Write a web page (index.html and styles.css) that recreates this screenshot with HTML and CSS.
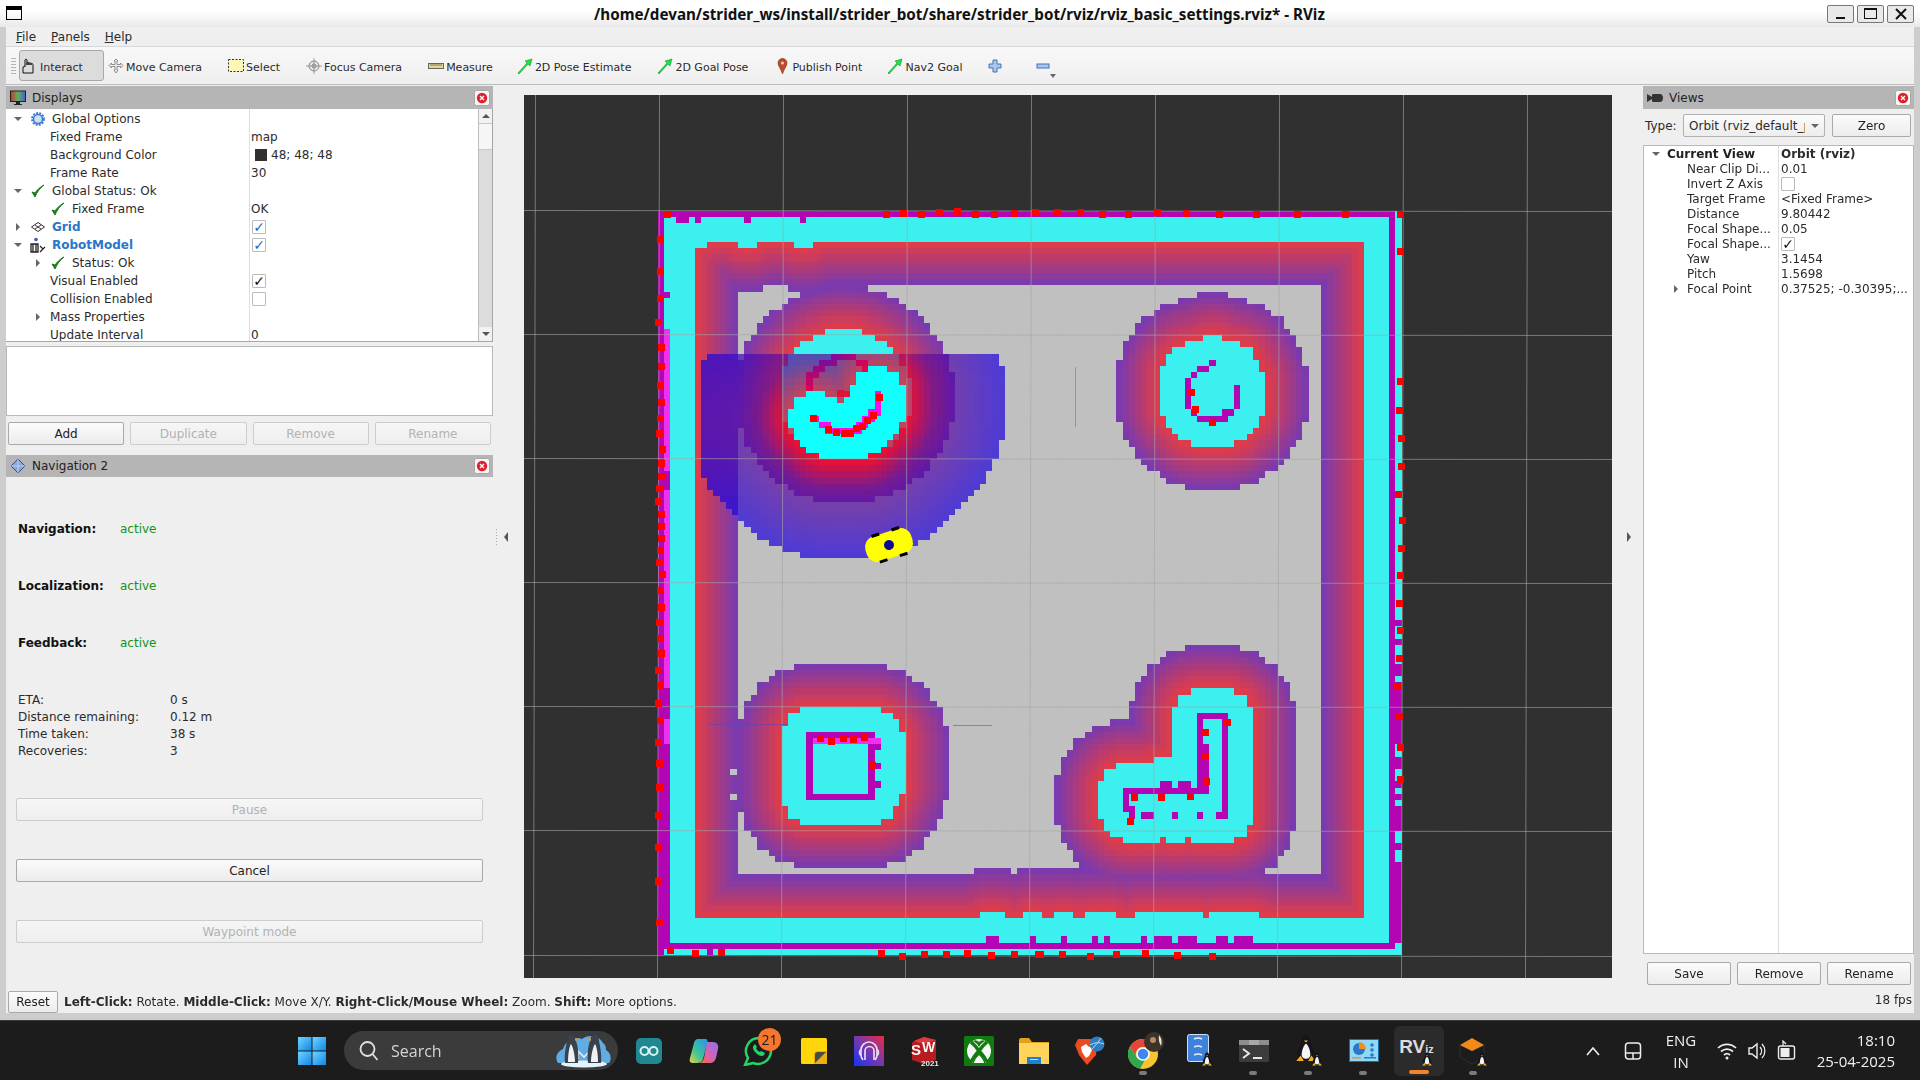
FILE: index.html
```html
<!DOCTYPE html>
<html lang="en">

<head>
    <meta charset="UTF-8">
    <title>RViz</title>
    <link rel="stylesheet" href="styles.css">
</head>

<body>
    <svg class="defs" width="0" height="0">
        <defs>
            <symbol id="check" viewBox="0 0 16 16">
                <path d="M2 9l3 5C7 9 10 5 14 2 10 4 7 7 5 10z" fill="#1e7d1e" stroke="#1e7d1e" stroke-width="1"/>
            </symbol>
            <symbol id="closeBtn" viewBox="0 0 16 16">
                <rect x=".5" y=".5" width="15" height="15" rx="2" fill="#f6f6f6" stroke="#a8a8a8"/>
                <circle cx="8" cy="8" r="5.2" fill="#e0202c"/>
                <path d="M6 6l4 4M10 6l-4 4" stroke="#fff" stroke-width="1.3"/>
            </symbol>
            <symbol id="arrowGreen" viewBox="0 0 16 16">
                <path d="M1 15L10 5 8 3l7-2-2 7-2-2L2 16z" fill="#14e83c" stroke="#0b7a22" stroke-width=".5"/>
            </symbol>
            <symbol id="tux" viewBox="0 0 20 26">
                <path d="M10 1c-3 0-4 3-4 6 0 3-4 7-4 12 0 2 1 4 3 5h10c2-1 3-3 3-5 0-5-4-9-4-12 0-3-1-6-4-6z" fill="#16161a"/>
                <path d="M10 9c-2 1-4 6-4 10 0 3 2 4 4 4s4-1 4-4c0-4-2-9-4-10z" fill="#f4f4f4"/>
                <path d="M8 6h4l-2 2z" fill="#f0b020"/>
                <path d="M1 25l4-5 3 5zM12 25l3-5 4 5z" fill="#f0b020"/>
            </symbol>
        </defs>
    </svg>

    <!-- Window title -->
    <div class="titlebar">
        <span class="win-icon"></span>
        <span class="win-title">/home/devan/strider_ws/install/strider_bot/share/strider_bot/rviz/rviz_basic_settings.rviz* - RViz</span>
        <div class="win-buttons">
            <span class="win-btn"><i class="glyph-min"></i></span>
            <span class="win-btn"><i class="glyph-max"></i></span>
            <span class="win-btn">
                <svg width="14" height="14" viewBox="0 0 14 14"><path d="M2 2l10 10M12 2L2 12" stroke="#111" stroke-width="2"/></svg>
            </span>
        </div>
    </div>

    <div class="app">
        <div class="menubar">
            <span><u>F</u>ile</span>
            <span><u>P</u>anels</span>
            <span><u>H</u>elp</span>
        </div>

        <!-- Tools -->
        <div class="toolbar">
            <span class="grip"></span>
            <div class="tool active">
                <svg class="tool-icon" viewBox="0 0 16 16"><path d="M1 15V9l2-1V9 M3 8V2c0-1 2-1 2 0v5 M5 7V5c0-1 2-1 2 0v2 M7 7V5.500c0-1 2-1 2 0V7 M9 7V6c0-1 2-.5 2 .5V15H1" fill="none" stroke="#111" stroke-width="1"/></svg>
                Interact
            </div>
            <div class="tool">
                <svg class="tool-icon" viewBox="0 0 16 16"><path d="M8 1l2 2H9v3.500h3.500V5L15 7.500 12.500 10V8.500H9V12h1l-2 3-2-3h1V8.500H3.500V10L1 7.500 3.500 5v1.500H7V3H6z" fill="#eee" stroke="#777" stroke-width=".8"/></svg>
                Move Camera
            </div>
            <div class="tool">
                <svg class="tool-icon" viewBox="0 0 16 16"><rect x=".5" y="1.500" width="15" height="12" fill="#fbf7b4" stroke="#333" stroke-width="1" stroke-dasharray="2 1.500"/></svg>
                Select
            </div>
            <div class="tool">
                <svg class="tool-icon" viewBox="0 0 16 16"><circle cx="8" cy="8" r="5" fill="#e6e6e6" stroke="#888"/><circle cx="8" cy="8" r="2" fill="none" stroke="#888"/><path d="M8 0v16M0 8h16" stroke="#888" stroke-width=".8"/></svg>
                Focus Camera
            </div>
            <div class="tool measure">
                <svg class="tool-icon" viewBox="0 0 16 16"><rect x=".5" y="5.500" width="15" height="5" fill="#e8d68c" stroke="#666"/><path d="M3 6v2M5 6v2M7 6v2M9 6v2M11 6v2M13 6v2" stroke="#777"/></svg>
                Measure
            </div>
            <div class="tool"><svg class="tool-icon"><use href="#arrowGreen"/></svg>2D Pose Estimate</div>
            <div class="tool"><svg class="tool-icon"><use href="#arrowGreen"/></svg>2D Goal Pose</div>
            <div class="tool publish">
                <svg class="tool-icon" viewBox="0 0 16 16"><path d="M4 5a4.500 4.500 0 0 1 9 0c0 3-3 6-4.500 11C7 11 4 8 4 5z" fill="#c0492a" stroke="#7a3416" stroke-width=".6"/><circle cx="8.500" cy="5" r="1.500" fill="#f4d0c0"/></svg>
                Publish Point
            </div>
            <div class="tool nav-goal"><svg class="tool-icon"><use href="#arrowGreen"/></svg>Nav2 Goal</div>
            <div class="tool icon-only">
                <svg class="tool-icon" viewBox="0 0 16 16"><path d="M6 2h4v4h4v4h-4v4H6v-4H2V6h4z" fill="#a9c6ea" stroke="#3f74b8"/></svg>
            </div>
            <div class="tool icon-only">
                <svg class="tool-icon" viewBox="0 0 16 16"><rect x="2" y="6" width="12" height="4" fill="#a9c6ea" stroke="#3f74b8"/></svg>
                <span class="more-arrow"></span>
            </div>
        </div>

        <div class="main">
            <!-- Left docks -->
            <div class="dock-left">
                <div class="dock-title">
                    <svg class="dock-icon" viewBox="0 0 16 16"><defs><linearGradient id="mon"><stop offset="0" stop-color="#d03030"/><stop offset=".5" stop-color="#60b060"/><stop offset="1" stop-color="#4060d0"/></linearGradient></defs><rect x=".5" y="1" width="15" height="10.500" fill="url(#mon)" stroke="#222"/><path d="M6 12h4v2h2v1H4v-1h2z" fill="#222"/></svg>
                    <span>Displays</span>
                    <svg class="dock-close"><use href="#closeBtn"/></svg>
                </div>

                <div class="tree displays-tree">
                    <div class="tree-rows">
                        <div class="row"><div class="name lvl0"><i class="arrow down"></i><span class="slot">
                            <svg width="14" height="14" viewBox="0 0 14 14"><circle cx="7" cy="7" r="4.500" fill="#cfe0f6" stroke="#3a78d0" stroke-width="1.500"/><circle cx="7" cy="7" r="6" fill="none" stroke="#3a78d0" stroke-width="1.800" stroke-dasharray="2 1.200"/></svg>
                        </span>Global Options</div><div class="value"></div></div>
                        <div class="row"><div class="name plain">Fixed Frame</div><div class="value">map</div></div>
                        <div class="row"><div class="name plain">Background Color</div><div class="value"><i class="swatch"></i>48; 48; 48</div></div>
                        <div class="row"><div class="name plain">Frame Rate</div><div class="value">30</div></div>
                        <div class="row"><div class="name lvl0"><i class="arrow down"></i><span class="slot"><svg width="16" height="16"><use href="#check"/></svg></span>Global Status: Ok</div><div class="value"></div></div>
                        <div class="row"><div class="name lvl1"><i class="arrow none"></i><span class="slot"><svg width="16" height="16"><use href="#check"/></svg></span>Fixed Frame</div><div class="value">OK</div></div>
                        <div class="row"><div class="name lvl0 display-name"><i class="arrow right"></i><span class="slot">
                            <svg width="14" height="10" viewBox="0 0 14 10"><path d="M7 .5L13.500 5 7 9.500.5 5zM4 3l6 4M10 3L4 7" fill="none" stroke="#333"/></svg>
                        </span>Grid</div><div class="value"><i class="box blue">&#10003;</i></div></div>
                        <div class="row"><div class="name lvl0 display-name"><i class="arrow down"></i><span class="slot">
                            <svg width="16" height="16" viewBox="0 0 16 16"><circle cx="6" cy="2.500" r="1.800" fill="#3a5ea8"/><path d="M1 15V7h7v8zM3 7v8M6 7v8" fill="none" stroke="#222" stroke-width="1.300"/><path d="M10 9l3 3 2-2M10 15l3-3" fill="none" stroke="#222" stroke-width="1.200"/></svg>
                        </span>RobotModel</div><div class="value"><i class="box blue">&#10003;</i></div></div>
                        <div class="row"><div class="name lvl1"><i class="arrow right"></i><span class="slot"><svg width="16" height="16"><use href="#check"/></svg></span>Status: Ok</div><div class="value"></div></div>
                        <div class="row"><div class="name plain">Visual Enabled</div><div class="value"><i class="box">&#10003;</i></div></div>
                        <div class="row"><div class="name plain">Collision Enabled</div><div class="value"><i class="box"></i></div></div>
                        <div class="row"><div class="name lvl1 no-icon"><i class="arrow right"></i>Mass Properties</div><div class="value"></div></div>
                        <div class="row"><div class="name plain">Update Interval</div><div class="value">0</div></div>
                    </div>
                    <div class="scrollbar">
                        <div class="sb-btn"><i class="sb-up"></i></div>
                        <div class="sb-thumb"></div>
                        <div class="sb-track"></div>
                        <div class="sb-btn"><i class="sb-down"></i></div>
                    </div>
                </div>

                <div class="help-box"></div>

                <div class="btn-row displays-btns">
                    <button class="btn">Add</button>
                    <button class="btn" disabled>Duplicate</button>
                    <button class="btn" disabled>Remove</button>
                    <button class="btn" disabled>Rename</button>
                </div>

                <div class="dock-title nav-title">
                    <svg class="dock-icon" viewBox="0 0 16 16"><path d="M8 1l7 7-7 7-7-7z" fill="#8ea6dc" stroke="#34508c"/><path d="M8 1v14M1 8h14" stroke="#dfe8fa" stroke-width=".6"/></svg>
                    <span>Navigation 2</span>
                    <svg class="dock-close"><use href="#closeBtn"/></svg>
                </div>

                <div class="nav-panel">
                    <div class="nav-status first"><b>Navigation:</b><span class="active-text">active</span></div>
                    <div class="nav-status"><b>Localization:</b><span class="active-text">active</span></div>
                    <div class="nav-status"><b>Feedback:</b><span class="active-text">active</span></div>

                    <div class="nav-stats">
                        <div><span>ETA:</span><span>0 s</span></div>
                        <div><span>Distance remaining:</span><span>0.12 m</span></div>
                        <div><span>Time taken:</span><span>38 s</span></div>
                        <div><span>Recoveries:</span><span>3</span></div>
                    </div>

                    <button class="btn wide pause" disabled>Pause</button>
                    <button class="btn wide cancel">Cancel</button>
                    <button class="btn wide waypoint" disabled>Waypoint mode</button>
                </div>
            </div>

            <div class="handle"><span class="dots"></span><i class="handle-arrow left"></i></div>

            <!-- 3D view -->
            <div class="viewport">
                <canvas id="mapCanvas" width="1088" height="883"></canvas>
            </div>

            <div class="handle right-handle"><i class="handle-arrow right"></i></div>

            <!-- Views -->
            <div class="dock-right">
                <div class="dock-title">
                    <svg class="dock-icon" viewBox="0 0 16 16"><path d="M0 4l5 3V5c0-1 1-1 2-1h6c2 0 3 2 3 4s-1 4-3 4H7c-1 0-2 0-2-1V9l-5 3z" fill="#333"/></svg>
                    <span>Views</span>
                    <svg class="dock-close"><use href="#closeBtn"/></svg>
                </div>
                <div class="type-row">
                    <span class="type-label">Type:</span>
                    <div class="combo"><span class="combo-text">Orbit (rviz_default_plugins)</span><i class="combo-arrow"></i></div>
                    <button class="btn zero">Zero</button>
                </div>
                <div class="views-tree">
                    <div class="vrow"><div class="vname head"><i class="arrow down"></i>Current View</div><div class="vvalue head">Orbit (rviz)</div></div>
                    <div class="vrow"><div class="vname">Near Clip Di...</div><div class="vvalue">0.01</div></div>
                    <div class="vrow"><div class="vname">Invert Z Axis</div><div class="vvalue"><i class="box">&nbsp;</i></div></div>
                    <div class="vrow"><div class="vname">Target Frame</div><div class="vvalue">&lt;Fixed Frame&gt;</div></div>
                    <div class="vrow"><div class="vname">Distance</div><div class="vvalue">9.80442</div></div>
                    <div class="vrow"><div class="vname">Focal Shape...</div><div class="vvalue">0.05</div></div>
                    <div class="vrow"><div class="vname">Focal Shape...</div><div class="vvalue"><i class="box">&#10003;</i></div></div>
                    <div class="vrow"><div class="vname">Yaw</div><div class="vvalue">3.1454</div></div>
                    <div class="vrow"><div class="vname">Pitch</div><div class="vvalue">1.5698</div></div>
                    <div class="vrow"><div class="vname sub"><i class="arrow right"></i>Focal Point</div><div class="vvalue">0.37525; -0.30395;...</div></div>
                    <div class="vrow fill"><div class="vname"></div><div class="vvalue"></div></div>
                </div>
                <div class="btn-row views-btns">
                    <button class="btn">Save</button>
                    <button class="btn">Remove</button>
                    <button class="btn">Rename</button>
                </div>
            </div>
        </div>

        <div class="statusbar">
            <button class="btn reset">Reset</button>
            <span class="hint"><b>Left-Click:</b> Rotate. <b>Middle-Click:</b> Move X/Y. <b>Right-Click/Mouse Wheel:</b> Zoom. <b>Shift:</b> More options.</span>
            <span class="fps">18 fps</span>
        </div>
    </div>

    <!-- Windows taskbar -->
    <div class="taskbar">
        <svg class="start" width="30" height="30" viewBox="0 0 30 30">
            <defs><linearGradient id="winBlue" x1="0" y1="0" x2="1" y2="1"><stop offset="0" stop-color="#6fd6ff"/><stop offset="1" stop-color="#0f86e8"/></linearGradient></defs>
            <rect x="1" y="1" width="13.500" height="13.500" fill="url(#winBlue)"/><rect x="15.500" y="1" width="13.500" height="13.500" fill="url(#winBlue)"/>
            <rect x="1" y="15.500" width="13.500" height="13.500" fill="url(#winBlue)"/><rect x="15.500" y="15.500" width="13.500" height="13.500" fill="url(#winBlue)"/>
        </svg>
        <div class="search">
            <svg width="22" height="22" viewBox="0 0 22 22"><circle cx="9.500" cy="9" r="7" fill="none" stroke="#e0e0e0" stroke-width="1.800"/><path d="M14.500 14l5 6" stroke="#e0e0e0" stroke-width="1.800"/></svg>
            <span class="search-text">Search</span>
            <svg class="search-art" width="58" height="36" viewBox="0 0 58 36">
                <path d="M3 30c-4-6 0-12 5-14C11 7 20 3 27 6c6-5 17-4 21 4 3 2 3 5 3 7 5 3 6 9 3 13z" fill="#62ace6"/>
                <ellipse cx="29" cy="31" rx="23" ry="3.500" fill="#e4f3fb"/>
                <path d="M20 14l9 9 9-9v12H34v-6l-5 5-5-5v6h-4z" fill="#f0f6fb"/>
                <path d="M16 2c4 0 5 3 5 6 2 5 3 14 2 22H10c-1-8 1-17 2-22 0-3 1-6 4-6zM40 2c-4 0-5 3-5 6-2 5-3 14-2 22h13c1-8-1-17-2-22 0-3-1-6-4-6z" fill="#3a424c"/>
                <path d="M16 11c-2 3-3 11-3 18h7c0-7-2-15-4-18zM40 11c2 3 3 11 3 18h-7c0-7 2-15 4-18z" fill="#eef2f6"/>
                <path d="M20 5l4 1-4 2zM36 5l-4 1 4 2z" fill="#e8902a"/>
            </svg>
        </div>

        <div class="task-items">
            <div class="task-item">
                <svg width="28" height="28" viewBox="0 0 28 28"><rect x="1" y="1" width="26" height="26" rx="5" fill="#20888e"/><circle cx="9.500" cy="14" r="4" fill="none" stroke="#d8f4f4" stroke-width="2"/><circle cx="18.500" cy="14" r="4" fill="none" stroke="#d8f4f4" stroke-width="2"/></svg>
            </div>
            <div class="task-item">
                <svg width="30" height="26" viewBox="0 0 30 26">
                    <defs><linearGradient id="coA" x1="0" y1="1" x2="1" y2="0"><stop offset="0" stop-color="#f0d040"/><stop offset=".4" stop-color="#40c890"/><stop offset="1" stop-color="#2a90f0"/></linearGradient>
                    <linearGradient id="coB" x1="1" y1="0" x2="0" y2="1"><stop offset="0" stop-color="#8f70f0"/><stop offset=".6" stop-color="#e060a8"/><stop offset="1" stop-color="#f07030"/></linearGradient></defs>
                    <path d="M9 1h7c3 0 3 2 2 5l-4 15c-1 3-3 4-6 4H4c-3 0-4-2-3-5L5 5c1-3 2-4 4-4z" fill="url(#coA)"/>
                    <path d="M18 4h6c4 0 6 3 5 7l-2 9c-1 3-3 5-6 5H9c3 0 5-2 6-5z" fill="url(#coB)"/>
                </svg>
            </div>
            <div class="task-item">
                <svg class="wa-icon" width="32" height="30" viewBox="0 0 32 30"><path d="M16 2A13 13 0 0 0 5 22L2 29l8-2a13 13 0 1 0 6-25z" fill="none" stroke="#25d366" stroke-width="2.500"/><path d="M11 9c-2 2-1 5 2 8s6 4 8 2l1-2-4-2-1 1c-2-1-3-2-4-4l1-1-2-3z" fill="#25d366"/></svg>
                <span class="badge">21</span>
            </div>
            <div class="task-item">
                <svg width="26" height="26" viewBox="0 0 26 26"><rect width="26" height="26" rx="1.500" fill="#ffd60a"/><path d="M26 13H17q-4 0-4 4v9h11q2 0 2-2z" fill="#e8b010"/><path d="M25 14H17q-3 0-3 3v8z" fill="#4a4a46"/></svg>
            </div>
            <div class="task-item">
                <svg width="30" height="30" viewBox="0 0 30 30">
                    <defs><linearGradient id="proton" x1="0" y1="1" x2="1" y2="0"><stop offset="0" stop-color="#1434f4"/><stop offset=".55" stop-color="#8038a8"/><stop offset="1" stop-color="#f02840"/></linearGradient></defs>
                    <rect width="30" height="30" fill="url(#proton)"/><path d="M11 24v-9a4.500 4.500 0 0 1 9 0v9" fill="none" stroke="#f0e0f4" stroke-width="1.600"/><path d="M9 24c-1-1-2-3-2-5v-5a8 8 0 0 1 16 0v5c0 2-1 4-2 5" fill="none" stroke="#f0e0f4" stroke-width="1.600"/><path d="M7 19c-2 0-2-5 0-5M23 19c2 0 2-5 0-5" fill="none" stroke="#f0e0f4" stroke-width="1.400"/></svg>
            </div>
            <div class="task-item sw-icon">
                <svg width="28" height="28" viewBox="0 0 28 28"><path d="M4 4l10-4 12 3v20l-12 4-12-4V6z" fill="#b81c20"/><path d="M4 4l10-4 12 3-12 4z" fill="#dc3a3e"/></svg>
                <span class="sw-label">S</span><span class="sw-label second">W</span><span class="sw-year">2021</span>
            </div>
            <div class="task-item">
                <svg width="30" height="30" viewBox="0 0 30 30"><rect width="30" height="30" rx="1.500" fill="#107c10"/><circle cx="15" cy="15" r="12" fill="#f6f6f6"/><path d="M7 6q5 4 8 9-6 6-8 12M23 6q-5 4-8 9 6 6 8 12" fill="none" stroke="#107c10" stroke-width="3.500"/><path d="M9 5q3-2 6 1 3-3 6-1-4 2-6 6-2-4-6-6z" fill="#107c10"/><path d="M15 18q-5 4-7 9h14q-2-5-7-9z" fill="#f6f6f6"/><path d="M15 18q-5 5-6 9M15 18q5 5 6 9" fill="none" stroke="#107c10" stroke-width="1.500"/></svg>
            </div>
            <div class="task-item">
                <svg width="30" height="26" viewBox="0 0 30 26"><path d="M0 2q0-2 2-2h8l3 4h17v22H0z" fill="#e2a21c"/><path d="M0 5h30v21H0z" fill="#ffd45a"/><rect x="8" y="19" width="14" height="7" fill="#1f80d4"/><rect x="11" y="21" width="8" height="1" fill="#bfe0fa"/></svg>
            </div>
            <div class="task-item brave">
                <svg width="32" height="30" viewBox="0 0 32 30"><path d="M4 3h15l4 6-1 10-9 10-8-10L1 9z" fill="#ec4a20"/><path d="M7 11l5-3 3 3 2-1 1 4-3 6-3 2-4-6z" fill="#fff"/><circle cx="23" cy="8" r="7.500" fill="#2f7cc0"/><path d="M16 9q7-4 14-1M18 13q6-6 9-11" fill="none" stroke="#b8dcf4" stroke-width="1"/></svg>
            </div>
            <div class="task-item chrome">
                <svg width="38" height="38" viewBox="0 0 38 38"><circle cx="15" cy="22" r="15" fill="#f7c531"/><path d="M15 7A15 15 0 0 0 2 14.500L9 26a7 7 0 0 1 6-11h14A15 15 0 0 0 15 7z" fill="#e8453a"/><path d="M2 14.500A15 15 0 0 0 12 36.700L18 26a7 7 0 0 1-9 0z" fill="#2fa84f"/><circle cx="15" cy="22" r="6" fill="#3f86f4" stroke="#fff" stroke-width="1.500"/><circle cx="26" cy="10" r="10" fill="#3c342a"/><circle cx="25" cy="8" r="3" fill="#b88a64"/><path d="M31 3q4 5 2 11-3-5-2-11z" fill="#dfe8e0"/></svg>
                <i class="run-dot"></i>
            </div>
            <div class="task-item">
                <svg class="doc-icon" width="22" height="28" viewBox="0 0 22 28"><rect x=".5" y=".5" width="21" height="27" rx="2" fill="#3f82dc" stroke="#cfe0f4"/><path d="M7 5q4-2 8 0M7 13q4-2 8 0M7 21q4-2 8 0" fill="none" stroke="#e4effa" stroke-width="1.400"/></svg>
                <svg class="tux-badge" width="14" height="14"><use href="#tux"/></svg>
            </div>
            <div class="task-item">
                <svg width="30" height="22" viewBox="0 0 30 22"><rect width="30" height="22" rx="1.500" fill="#3c3c3c"/><rect width="30" height="5" fill="#8e8e8e"/><rect x="10" width="10" height="5" fill="#a8a8a8"/><path d="M4 9l6 4.500-6 4.500" fill="none" stroke="#e8e8e8" stroke-width="2"/><rect x="14" y="17" width="9" height="2" fill="#e8e8e8"/></svg>
                <i class="run-dot"></i>
            </div>
            <div class="task-item">
                <svg class="big-tux" width="24" height="28"><use href="#tux"/></svg>
                <svg class="tux-badge" width="14" height="14"><use href="#tux"/></svg>
                <i class="run-dot"></i>
            </div>
            <div class="task-item">
                <svg width="30" height="23" viewBox="0 0 30 23"><rect width="30" height="23" fill="#1a6aa4"/><rect x="1" y="1" width="28" height="21" fill="#8fd8f8"/><circle cx="10" cy="10" r="6" fill="#2a78c8"/><path d="M10 10V3a7 7 0 0 1 7 7z" fill="#f09020"/><circle cx="23" cy="6" r="1.800" fill="#2a78c8"/><circle cx="23" cy="11" r="1.800" fill="#2a78c8"/><circle cx="23" cy="16" r="1.800" fill="#2a78c8"/><rect x="3" y="18" width="9" height="1.500" fill="#f09020"/><rect x="15" y="18" width="12" height="1.500" fill="#2a78c8"/></svg>
                <i class="run-dot"></i>
            </div>
            <div class="task-item current">
                <span class="rviz-label">RV<small>iz</small></span>
                <svg class="tux-badge" width="14" height="14"><use href="#tux"/></svg>
                <i class="run-bar"></i>
            </div>
            <div class="task-item">
                <svg class="diamond" width="26" height="28" viewBox="0 0 26 28"><path d="M1 8l12 6 12-6v12l-12 7-12-7z" fill="none" stroke="#2e2e2e"/><path d="M13 1l12 7-12 6L1 8z" fill="#f28a1a"/></svg>
                <svg class="tux-badge" width="14" height="14"><use href="#tux"/></svg>
                <i class="run-dot"></i>
            </div>
        </div>

        <div class="tray">
            <svg class="tray-chevron" width="14" height="10" viewBox="0 0 14 10"><path d="M1 9l6-7 6 7" fill="none" stroke="#eee" stroke-width="1.600"/></svg>
            <svg class="tray-pad" width="18" height="20" viewBox="0 0 18 20"><rect x="1.500" y="2" width="15" height="16" rx="3" fill="none" stroke="#eee" stroke-width="1.500"/><path d="M1.500 12h15M9 12v6" stroke="#eee" stroke-width="1.500"/></svg>
            <div class="lang"><span>ENG</span><span>IN</span></div>
            <svg class="tray-wifi" width="20" height="18" viewBox="0 0 20 18"><path d="M1 6a13 13 0 0 1 18 0M4 9.500a9 9 0 0 1 12 0M7 13a4.500 4.500 0 0 1 6 0" fill="none" stroke="#eee" stroke-width="1.700"/><circle cx="10" cy="16" r="1.500" fill="#eee"/></svg>
            <svg class="tray-sound" width="20" height="20" viewBox="0 0 20 20"><path d="M2 7h3l5-4v14l-5-4H2z" fill="none" stroke="#eee" stroke-width="1.400"/><path d="M13 6a6 6 0 0 1 0 8M15 3a10 10 0 0 1 0 14" fill="none" stroke="#eee" stroke-width="1.300"/></svg>
            <svg class="tray-batt" width="20" height="22" viewBox="0 0 20 22"><rect x="1.500" y="6" width="16" height="13" rx="2" fill="none" stroke="#eee" stroke-width="1.400"/><rect x="3.500" y="8" width="9" height="9" fill="#eee"/><path d="M6 6V1l3 3" fill="none" stroke="#eee" stroke-width="1.200"/></svg>
            <div class="clock"><span>18:10</span><span>25-04-2025</span></div>
        </div>
    </div>

    <script src="map.js"></script>
</body>

</html>
```

FILE: styles.css
```css
/* Reset */
* {
    margin: 0;
    padding: 0;
    box-sizing: border-box;
}

body {
    width: 1920px;
    height: 1080px;
    overflow: hidden;
    display: flex;
    flex-direction: column;
    font-family: "DejaVu Sans", sans-serif;
    font-size: 12px;
    color: #2b2b2b;
    background: #1c1c1c;
}

i {
    font-style: normal;
}

.defs {
    position: absolute;
}

/* Title bar */
.titlebar {
    height: 27px;
    display: flex;
    align-items: center;
    padding-left: 6px;
    background: linear-gradient(#ffffff 40%, #e9e9e9);
}

.win-icon {
    width: 16px;
    height: 14px;
    border: 1px solid #000;
    border-top-width: 4px;
    margin-top: -1px;
}

.win-title {
    margin-left: 572px;
    width: 731px;
    font-family: "Noto Sans", sans-serif;
    font-weight: 700;
    font-size: 15.2px;
    color: #111;
    white-space: nowrap;
}

.win-buttons {
    margin-left: auto;
    margin-right: 6px;
    display: flex;
    gap: 3px;
}

.win-btn {
    width: 27px;
    height: 18px;
    border: 1px solid #777;
    border-radius: 2px;
    background: #e9e9e9;
    display: flex;
    align-items: center;
    justify-content: center;
}

.glyph-min {
    width: 9px;
    height: 2px;
    background: #111;
    margin-top: 9px;
}

.glyph-max {
    width: 13px;
    height: 11px;
    border: 1px solid #111;
    border-top-width: 2px;
}

/* Application window */
.app {
    height: 993px;
    display: flex;
    flex-direction: column;
    background: #efefef;
    border-left: 6px solid #cdcdcd;
    border-right: 6px solid #cdcdcd;
    border-bottom: 7px solid #cdcdcd;
}

.menubar {
    height: 20px;
    display: flex;
    align-items: center;
    gap: 15px;
    padding-left: 10px;
    font-size: 12px;
    border-bottom: 1px solid #d8d8d8;
}

.toolbar {
    height: 38px;
    display: flex;
    align-items: center;
    font-size: 11px;
    background: linear-gradient(#f8f8f8, #efefef);
    border-bottom: 1px solid #bdbdbd;
}

.grip {
    width: 5px;
    height: 17px;
    margin-left: 5px;
    margin-right: 3px;
    background-image: radial-gradient(#b5b5b5 40%, transparent 50%);
    background-size: 2px 3px;
}

.tool {
    position: relative;
    height: 31px;
    display: flex;
    align-items: center;
    gap: 2px;
    padding: 3px 22px 0 4px;
    white-space: nowrap;
}

.tool.active {
    padding-left: 2px;
    padding-right: 20px;
    background: #dcdcdc;
    border: 1px solid #a8a8a8;
    border-radius: 3px;
}

.tool.measure {
    padding-right: 20px;
}

.tool.publish {
    padding-right: 21px;
}

.tool.nav-goal {
    padding-right: 25px;
}

.tool.icon-only {
    padding: 0 32px 0 0;
}

.tool-icon {
    width: 16px;
    height: 16px;
    flex: none;
    margin-top: -3px;
}

.tool.icon-only .tool-icon {
    margin-top: 0;
}

.more-arrow {
    position: absolute;
    left: 15px;
    top: 24px;
    border: 3px solid transparent;
    border-top: 4px solid #666;
}

/* Main area */
.main {
    flex: 1;
    min-height: 0;
    display: flex;
}

.dock-left {
    width: 487px;
    display: flex;
    flex-direction: column;
    padding-top: 1px;
}

.dock-title {
    height: 23px;
    flex: none;
    display: flex;
    align-items: center;
    padding-left: 4px;
    font-size: 12px;
    background: #b5b5b5;
    color: #222;
}

.dock-icon {
    width: 16px;
    height: 16px;
    margin-right: 6px;
}

.dock-close {
    width: 16px;
    height: 16px;
    margin-left: auto;
    margin-right: 3px;
}

/* Displays tree */
.tree {
    height: 233px;
    flex: none;
    display: flex;
    background: #fff;
    border-bottom: 1px solid #a6a6a6;
    border-right: 1px solid #a6a6a6;
}

.tree-rows {
    flex: 1;
    overflow: hidden;
}

.row {
    height: 18px;
    display: flex;
}

.name {
    width: 243px;
    height: 18px;
    padding-top: 1px;
    display: flex;
    align-items: center;
    white-space: nowrap;
}

.name.plain {
    padding-left: 44px;
}

.name.lvl0 {
    padding-left: 6px;
}

.name.lvl1 {
    padding-left: 26px;
}

.name.no-icon .arrow {
    margin-right: 6px;
}

.display-name {
    font-weight: 700;
    color: #2a76c8;
}

.value {
    flex: 1;
    display: flex;
    align-items: center;
    height: 18px;
    padding-top: 1px;
    padding-left: 1px;
    border-left: 1px solid #dedede;
}

.slot {
    width: 28px;
    display: flex;
    justify-content: center;
    align-items: center;
}

.arrow {
    width: 12px;
    height: 12px;
    flex: none;
    display: flex;
    position: relative;
}

.arrow.down::before {
    content: "";
    position: absolute;
    left: 2px;
    top: 4px;
    border: 4px solid transparent;
    border-top: 4px solid #666;
}

.arrow.right::before {
    content: "";
    position: absolute;
    left: 4px;
    top: 2px;
    border: 4px solid transparent;
    border-left: 4px solid #666;
}

.swatch {
    width: 12px;
    height: 12px;
    margin-left: 4px;
    margin-right: 4px;
    background: #303030;
}

.box {
    width: 14px;
    height: 14px;
    margin-left: 1px;
    display: flex;
    align-items: center;
    justify-content: center;
    font-size: 14px;
    font-weight: 700;
    line-height: 1;
    color: #111;
    background: #fff;
    border: 1px solid #bbb;
    border-radius: 1px;
}

.box.blue {
    color: #1d6fc4;
}

.scrollbar {
    width: 14px;
    display: flex;
    flex-direction: column;
    border-left: 1px solid #bdbdbd;
    background: #dcdcdc;
}

.sb-btn {
    height: 14px;
    background: #f2f2f2;
    display: flex;
    align-items: center;
    justify-content: center;
}

.sb-thumb {
    height: 27px;
    background: #f6f6f6;
    border-top: 1px solid #c8c8c8;
    border-bottom: 1px solid #c8c8c8;
}

.sb-track {
    flex: 1;
}

.sb-up {
    border: 4px solid transparent;
    border-bottom: 4px solid #555;
    margin-top: -4px;
}

.sb-down {
    border: 4px solid transparent;
    border-top: 4px solid #555;
    margin-top: 4px;
}

.help-box {
    height: 70px;
    flex: none;
    margin-top: 4px;
    background: #fff;
    border: 1px solid #b9b9b9;
}

/* Buttons */
.btn {
    height: 23px;
    font-family: "DejaVu Sans", sans-serif;
    font-size: 12px;
    color: #222;
    background: linear-gradient(#fbfbfb, #ececec);
    border: 1px solid #a9a9a9;
    border-radius: 2px;
}

.btn:disabled {
    color: #b2b2b2;
    background: linear-gradient(#f6f6f6, #eeeeee);
    border-color: #cdcdcd;
}

.btn-row {
    display: flex;
    flex: none;
}

.displays-btns {
    margin-top: 6px;
    padding: 0 2px 0 2px;
    gap: 6px;
}

.displays-btns .btn {
    flex: 1;
}

.nav-title {
    margin-top: 10px;
    height: 22px;
}

/* Navigation 2 panel */
.nav-panel {
    flex: 1;
    display: flex;
    flex-direction: column;
    padding-left: 12px;
}

.nav-status {
    height: 57px;
    display: flex;
    align-items: center;
}

.nav-status.first {
    margin-top: 23px;
}

.nav-status b {
    width: 102px;
    color: #111;
}

.active-text {
    color: #169216;
}

.nav-stats {
    margin-top: 21px;
    line-height: 17px;
}

.nav-stats div {
    display: flex;
}

.nav-stats span:first-child {
    width: 152px;
}

.btn.wide {
    width: 467px;
    margin-left: -2px;
}

.btn.pause {
    margin-top: 38px;
}

.btn.cancel {
    margin-top: 38px;
}

.btn.waypoint {
    margin-top: 38px;
}

/* Splitter handles */
.handle {
    width: 31px;
    position: relative;
    display: flex;
    align-items: center;
}

.dots {
    position: absolute;
    left: 3px;
    top: 444px;
    width: 1px;
    height: 16px;
    background-image: linear-gradient(#aaa 50%, transparent 50%);
    background-size: 1px 3px;
}

.handle-arrow {
    position: absolute;
    top: 447px;
}

.handle-arrow.left {
    left: 11px;
    border: 5px solid transparent;
    border-left: 0;
    border-right: 4px solid #555;
}

.handle-arrow.right {
    left: 15px;
    border: 5px solid transparent;
    border-right: 0;
    border-left: 4px solid #555;
}

.right-handle {
    width: 31px;
}

/* 3D view */
.viewport {
    width: 1088px;
    height: 883px;
    margin-top: 10px;
    background: #303030;
}

#mapCanvas {
    display: block;
}

/* Views panel */
.dock-right {
    width: 271px;
    display: flex;
    flex-direction: column;
    padding-top: 1px;
}

.type-row {
    height: 23px;
    flex: none;
    margin-top: 5px;
    display: flex;
    align-items: center;
    padding-left: 2px;
}

.type-label {
    width: 38px;
}

.combo {
    width: 142px;
    height: 23px;
    display: flex;
    align-items: center;
    padding-left: 5px;
    background: linear-gradient(#fbfbfb, #ededed);
    border: 1px solid #b0b0b0;
    border-radius: 2px;
}

.combo-text {
    width: 116px;
    overflow: hidden;
    white-space: nowrap;
}

.combo-arrow {
    margin-left: 6px;
    margin-top: 4px;
    border: 4px solid transparent;
    border-top: 4px solid #666;
}

.btn.zero {
    width: 79px;
    margin-left: 7px;
}

.views-tree {
    flex: 1;
    min-height: 0;
    margin-top: 8px;
    display: flex;
    flex-direction: column;
    background: #fff;
    border: 1px solid #b9b9b9;
}

.vrow {
    height: 15px;
    display: flex;
    line-height: 14px;
    white-space: nowrap;
}

.vrow.fill {
    flex: 1;
}

.vname {
    width: 135px;
    padding-left: 43px;
    display: flex;
    align-items: center;
    border-right: 1px solid #dedede;
}

.vname.head {
    padding-left: 6px;
    font-weight: 700;
    color: #222;
}

.vname.head .arrow {
    margin-right: 5px;
}

.vname.sub {
    padding-left: 26px;
}

.vname.sub .arrow {
    margin-right: 5px;
}

.vvalue {
    flex: 1;
    padding-left: 2px;
    display: flex;
    align-items: center;
}

.vvalue.head {
    font-weight: 700;
}

.vvalue .box {
    margin-left: 0;
}

.views-btns {
    margin-top: 8px;
    margin-bottom: 1px;
    padding: 0 3px 0 4px;
    gap: 6px;
}

.views-btns .btn {
    flex: 1;
}

/* Status bar */
.statusbar {
    height: 27px;
    flex: none;
    display: flex;
    align-items: center;
    padding-left: 2px;
    padding-top: 4px;
}

.btn.reset {
    width: 50px;
    height: 22px;
}

.hint {
    margin-left: 6px;
    white-space: nowrap;
}

.fps {
    margin-left: auto;
    margin-right: 2px;
    margin-top: -4px;
}

/* Windows taskbar */
.taskbar {
    height: 60px;
    flex: none;
    display: flex;
    align-items: center;
    background: #1c1c1c;
    border-top: 1px solid #3a3a3a;
}

.start {
    margin-left: 297px;
}

.search {
    width: 274px;
    height: 39px;
    margin-left: 17px;
    position: relative;
    display: flex;
    align-items: center;
    padding-left: 14px;
    background: #3b3b3b;
    border-radius: 20px;
}

.search-text {
    margin-left: 11px;
    font-family: "Open Sans", sans-serif;
    font-size: 16px;
    color: #d4d4d4;
}

.search-art {
    position: absolute;
    right: 5px;
    top: 2px;
}

.task-items {
    display: flex;
    margin-left: 3px;
}

.task-item {
    position: relative;
    width: 55px;
    height: 58px;
    display: flex;
    align-items: center;
    justify-content: center;
}

.task-item.current {
    width: 50px;
    height: 50px;
    margin: 4px 2.5px;
    background: #2b2b2b;
    border-radius: 6px;
}

.task-item.brave svg {
    margin-left: 3px;
}

.task-item.chrome svg {
    margin-left: 6px;
}

.badge {
    position: absolute;
    left: 27px;
    top: 6px;
    width: 23px;
    height: 23px;
    line-height: 23px;
    text-align: center;
    border-radius: 50%;
    background: #f5762c;
    font-family: "Open Sans", sans-serif;
    font-size: 14px;
    color: #1c1c1c;
}

.wa-icon {
    margin-left: 0;
}

.sw-label {
    position: absolute;
    left: 15px;
    top: 19px;
    font-family: "Liberation Sans", sans-serif;
    font-weight: 700;
    font-size: 15px;
    color: #f6f6f6;
}

.sw-label.second {
    left: 26px;
    top: 17px;
    font-size: 14px;
}

.sw-year {
    position: absolute;
    left: 25px;
    top: 37px;
    font-family: "Liberation Sans", sans-serif;
    font-weight: 700;
    font-size: 8px;
    color: #e6e6e6;
}

.rviz-label {
    margin-top: -8px;
    margin-left: -4px;
    font-family: "Liberation Sans", sans-serif;
    font-weight: 700;
    font-size: 19px;
    color: #dcdcdc;
}

.rviz-label small {
    font-size: 11px;
}

.tux-badge {
    position: absolute;
    left: 29px;
    top: 30px;
}

.current .tux-badge {
    left: 26px;
    top: 26px;
}

.doc-icon {
    margin-left: -2px;
    margin-top: -6px;
}

.big-tux {
    margin-left: -6px;
    margin-top: -6px;
}

.diamond {
    margin-left: -4px;
    margin-top: 0;
}

.run-dot {
    position: absolute;
    left: 23px;
    top: 49px;
    width: 8px;
    height: 4px;
    border-radius: 2px;
    background: #7b7b7b;
}

.run-bar {
    position: absolute;
    left: 15px;
    top: 44px;
    width: 20px;
    height: 4px;
    border-radius: 2px;
    background: #f5822c;
}

/* Tray */
.tray {
    margin-left: auto;
    width: 347px;
    display: flex;
    align-items: center;
    position: relative;
    height: 58px;
    color: #f0f0f0;
    font-family: "Open Sans", sans-serif;
}

.tray-chevron {
    margin-left: 13px;
}

.tray-pad {
    margin-left: 24px;
}

.lang {
    margin-left: 19px;
    width: 40px;
    display: flex;
    flex-direction: column;
    align-items: center;
    font-size: 15px;
    line-height: 22px;
}

.tray-wifi {
    margin-left: 16px;
}

.tray-sound {
    margin-left: 10px;
}

.tray-batt {
    margin-left: 10px;
}

.clock {
    margin-left: auto;
    margin-right: 25px;
    display: flex;
    flex-direction: column;
    align-items: flex-end;
    font-size: 15px;
    line-height: 21px;
}
```

FILE: map.js
```js
// Occupancy map, costmaps and laser scan drawn cell by cell
const canvas = document.getElementById("mapCanvas");
const ctx = canvas.getContext("2d");

const CELL = 6.2;
const X0 = 657.5;
const Y0 = 211;
const N = 120;
const OX = 524; // canvas origin on the page
const OY = 95;

// kinds: 1 dark magenta, 2 bright magenta, 3 inflates but shows cyan
function makeLayer() {
    return { kind: new Uint8Array(N * N), dist: new Float32Array(N * N).fill(1e9) };
}

function rect(layer, x1, y1, x2, y2, kind) {
    const c1 = Math.round((x1 - X0) / CELL);
    const c2 = Math.max(Math.round((x2 - X0) / CELL), c1 + 1);
    const r1 = Math.round((y1 - Y0) / CELL);
    const r2 = Math.max(Math.round((y2 - Y0) / CELL), r1 + 1);
    for (let r = Math.max(r1, 0); r < Math.min(r2, N); r++) {
        for (let c = Math.max(c1, 0); c < Math.min(c2, N); c++) {
            layer.kind[r * N + c] = kind;
        }
    }
}

// one cell, centred on a point
function dot(layer, x, y, kind) {
    rect(layer, x - CELL / 2, y - CELL / 2, x + CELL / 2, y + CELL / 2, kind);
}

function ring(layer, cx, cy, radius, kind) {
    for (let a = 0; a < 360; a += 3) {
        dot(layer, cx + radius * Math.cos(a * Math.PI / 180), cy + radius * Math.sin(a * Math.PI / 180), kind);
    }
}

function disc(layer, cx, cy, radius, kind) {
    for (let r = radius; r > 0; r -= 3) ring(layer, cx, cy, r, kind);
}

function polyline(layer, pts, kind) {
    for (let i = 0; i < pts.length - 1; i++) {
        const [ax, ay] = pts[i];
        const [bx, by] = pts[i + 1];
        for (let t = 0; t <= 1; t += 0.1) {
            dot(layer, ax + (bx - ax) * t, ay + (by - ay) * t, kind);
        }
    }
}

function inflate(layer, reach) {
    for (let r = 0; r < N; r++) {
        for (let c = 0; c < N; c++) {
            if (!layer.kind[r * N + c]) continue;
            for (let j = Math.max(r - reach, 0); j <= Math.min(r + reach, N - 1); j++) {
                for (let i = Math.max(c - reach, 0); i <= Math.min(c + reach, N - 1); i++) {
                    const d = Math.hypot(i - c, j - r);
                    if (d < layer.dist[j * N + i]) layer.dist[j * N + i] = d;
                }
            }
        }
    }
}

function fillCell(c, r, color) {
    const x1 = Math.round(X0 + c * CELL) - OX;
    const x2 = Math.round(X0 + (c + 1) * CELL) - OX;
    const y1 = Math.round(Y0 + r * CELL) - OY;
    const y2 = Math.round(Y0 + (r + 1) * CELL) - OY;
    ctx.fillStyle = color;
    ctx.fillRect(x1, y1, x2 - x1, y2 - y1);
}

function mix(a, b, t) {
    return [0, 1, 2].map((i) => Math.round(a[i] + (b[i] - a[i]) * t));
}

// ---- Global costmap ----
const globalMap = makeLayer();

// walls
rect(globalMap, 658, 211, 1396, 217, 1);
rect(globalMap, 658, 211, 664, 955, 1);
rect(globalMap, 1390, 211, 1396, 950, 1);
rect(globalMap, 658, 943, 1396, 949, 1);
rect(globalMap, 664, 217, 670, 328, 3);
rect(globalMap, 664, 291, 670, 297, 1);
rect(globalMap, 664, 328, 670, 474, 2);
rect(globalMap, 664, 474, 670, 490, 1);
rect(globalMap, 664, 490, 670, 690, 2);
rect(globalMap, 664, 690, 670, 720, 1);
rect(globalMap, 664, 720, 670, 745, 2);
rect(globalMap, 664, 745, 670, 945, 1);

// wall nubs
[[677, 688], [695, 702], [745, 751], [801, 807]].forEach(([a, b]) => rect(globalMap, a, 217, b, 223, 1));
[[984, 996], [1028, 1034], [1059, 1065], [1090, 1096], [1102, 1108], [1139, 1145], [1152, 1170], [1176, 1195], [1214, 1226], [1232, 1251]]
    .forEach(([a, b]) => rect(globalMap, a, 937, b, 943, 1));
rect(globalMap, 705, 949, 711, 955, 1);
[[620, 623], [640, 647], [665, 678], [683, 747], [758, 772], [783, 790], [795, 802], [808, 833], [845, 852], [865, 945]]
    .forEach(([a, b]) => rect(globalMap, 1396, a, 1402, b, 1));

// top left obstacle
ring(globalMap, 845, 395, 37, 1);

// top right obstacle
disc(globalMap, 1212, 392, 26, 3);
rect(globalMap, 1210, 361, 1216, 367, 1);
rect(globalMap, 1197, 368, 1210, 374, 1);
rect(globalMap, 1191, 374, 1197, 380, 1);
rect(globalMap, 1185, 380, 1191, 410, 1);
rect(globalMap, 1191, 410, 1197, 417, 1);
rect(globalMap, 1197, 417, 1227, 423, 1);
rect(globalMap, 1222, 410, 1234, 416, 1);
rect(globalMap, 1234, 386, 1240, 411, 1);

// bottom left obstacle, a square
rect(globalMap, 806, 732, 873, 800, 3);
rect(globalMap, 806, 732, 873, 738, 1);
rect(globalMap, 806, 794, 873, 800, 1);
rect(globalMap, 806, 732, 812, 800, 1);
rect(globalMap, 867, 732, 873, 800, 1);
rect(globalMap, 812, 738, 879, 744, 2);
[[745, 750], [763, 769], [782, 788]].forEach(([a, b]) => rect(globalMap, 873, a, 879, b, 1));

// bottom right obstacle, an L
rect(globalMap, 1196, 715, 1227, 721, 1);
rect(globalMap, 1196, 715, 1202, 795, 1);
rect(globalMap, 1202, 745, 1208, 795, 1);
rect(globalMap, 1221, 715, 1227, 819, 1);
rect(globalMap, 1121, 789, 1208, 795, 1);
rect(globalMap, 1121, 789, 1127, 813, 1);
rect(globalMap, 1127, 808, 1133, 819, 1);
[[1140, 1152], [1171, 1177], [1195, 1202], [1214, 1226]].forEach(([a, b]) => rect(globalMap, a, 814, b, 820, 1));
[[1158, 1171], [1177, 1189]].forEach(([a, b]) => rect(globalMap, a, 783, b, 789, 1));

inflate(globalMap, 12);

const RED = [220, 60, 75];
const PURPLE = [124, 58, 172];

for (let r = 0; r < N; r++) {
    for (let c = 0; c < N; c++) {
        const kind = globalMap.kind[r * N + c];
        const d = globalMap.dist[r * N + c];
        let color;
        if (kind === 1) color = "#b405b4";
        else if (kind === 2) color = "#f030f0";
        else if (d < 4.3 || kind === 3) color = "#3bf0ee";
        else if (d < 11.4) color = "rgb(" + mix(RED, PURPLE, Math.max(d - 5, 0) / 6) + ")";
        else color = "#c0c0c0";
        fillCell(c, r, color);
    }
}

// gaps in the inflated band beside the square
ctx.fillStyle = "#c0c0c0";
[[730, 769], [730, 794]].forEach(([x, y]) => ctx.fillRect(x - OX, y - OY, 7, 6));

// ---- Local costmap, laid over the global one ----
const localMap = makeLayer();
polyline(localMap, [[813, 418], [828, 429], [836, 432], [844, 433], [850, 433], [856, 428], [862, 426], [867, 420], [873, 415], [878, 406], [879, 397]], 2);
inflate(localMap, 22);

const L_RED = [255, 0, 30];
const L_MID = [105, 15, 145];
const L_BLUE = [28, 6, 226];

for (let r = 0; r < N; r++) {
    for (let c = 0; c < N; c++) {
        const px = X0 + c * CELL;
        const py = Y0 + r * CELL;
        const d = localMap.dist[r * N + c];
        if (d > 20.5 || px < 700 || py < 352 || px > 1002) continue;
        if (localMap.kind[r * N + c]) {
            fillCell(c, r, "#f010f0");
        } else if (d < 4.3) {
            fillCell(c, r, "#10ffff");
        } else {
            const t = (d - 4.3) / 16.7;
            const col = t < 0.3 ? mix(L_RED, L_MID, t / 0.3) : mix(L_MID, L_BLUE, (t - 0.3) / 0.7);
            fillCell(c, r, "rgba(" + col + ",0.72)");
        }
    }
}

// ---- Grid lines ----
ctx.strokeStyle = "rgba(165,165,165,0.62)";
ctx.lineWidth = 1;
[535, 659, 783, 907, 1031, 1155, 1279, 1403, 1527].forEach((x) => {
    ctx.beginPath();
    ctx.moveTo(x - OX + 0.5, 0);
    ctx.lineTo(x - OX - 1.5, 883);
    ctx.stroke();
});
[210, 334, 458, 582, 706, 830, 955].forEach((y) => {
    ctx.beginPath();
    ctx.moveTo(0, y - OY + 0.5);
    ctx.lineTo(1088, y - OY + 1.5);
    ctx.stroke();
});

// stray thin marks
ctx.strokeStyle = "rgba(90,70,190,0.55)";
ctx.beginPath();
ctx.moveTo(707 - OX, 724.5 - OY);
ctx.lineTo(788 - OX, 724.5 - OY);
ctx.moveTo(953 - OX, 725.5 - OY);
ctx.lineTo(992 - OX, 725.5 - OY);
ctx.stroke();
ctx.strokeStyle = "rgba(120,120,120,0.6)";
ctx.beginPath();
ctx.moveTo(1075.5 - OX, 367 - OY);
ctx.lineTo(1075.5 - OX, 427 - OY);
ctx.stroke();

// ---- Laser scan ----
const scan = [
    // top
    [667, 214], [886, 214], [903, 213], [921, 214], [939, 212], [957, 211], [975, 214], [994, 214], [1014, 213], [1035, 212], [1057, 212],
    [1080, 212], [1102, 214], [1128, 214], [1157, 212], [1186, 213], [1219, 214], [1256, 214], [1297, 214], [1345, 214], [1400, 214],
    // left
    [660, 239], [660, 271], [660, 298], [658, 322], [661, 347], [661, 366], [660, 385], [661, 402], [660, 418], [659, 433], [662, 449],
    [661, 463], [661, 476], [659, 488], [658, 501], [661, 514], [661, 526], [661, 538], [660, 550], [659, 562], [662, 574], [660, 590],
    [661, 607], [659, 622], [660, 638], [661, 653], [658, 670], [660, 685], [658, 703], [660, 720], [658, 742], [659, 763], [659, 787],
    [658, 815], [658, 847], [658, 881], [659, 922], [670, 950],
    // bottom
    [695, 953], [721, 952], [881, 953], [902, 956], [924, 954], [946, 954], [967, 953], [991, 955], [1014, 954], [1038, 954], [1040, 954],
    [1062, 954], [1090, 956], [1116, 954], [1145, 953], [1177, 955], [1212, 956],
    // right
    [1400, 251], [1400, 381], [1399, 410], [1401, 438], [1401, 466], [1398, 494], [1402, 520], [1401, 548], [1400, 575], [1399, 603],
    [1400, 630], [1399, 658], [1397, 686], [1399, 716], [1400, 747], [1400, 779],
    // obstacles
    [1191, 392], [1195, 409], [1212, 422],
    [820, 738], [831, 741], [843, 738], [853, 739], [864, 737], [872, 765],
    [1227, 722], [1205, 732], [1205, 756], [1206, 781], [1190, 796], [1161, 797], [1134, 797], [1130, 821],
    [879, 397], [873, 415], [867, 420], [862, 426], [856, 428], [850, 433], [844, 433], [836, 432], [828, 429], [813, 418],
];
ctx.fillStyle = "#ff0000";
scan.forEach(([x, y]) => ctx.fillRect(x - 3 - OX, y - 3 - OY, 7, 7));
ctx.fillStyle = "#d8143c";
ctx.fillRect(837 - OX, 390 - OY, 7, 6);

// ---- Robot ----
ctx.save();
ctx.translate(889 - OX, 545 - OY);
ctx.rotate(-18 * Math.PI / 180);
ctx.fillStyle = "#ffff00";
ctx.beginPath();
ctx.roundRect(-24, -13, 48, 26, 11);
ctx.fill();
ctx.fillStyle = "#000";
[-14, 7].forEach((x) => {
    ctx.fillRect(x, -15, 8, 3);
    ctx.fillRect(x, 12, 8, 3);
});
ctx.fillStyle = "#0a0a90";
ctx.beginPath();
ctx.arc(0, 0, 5, 0, Math.PI * 2);
ctx.fill();
ctx.restore();
```
